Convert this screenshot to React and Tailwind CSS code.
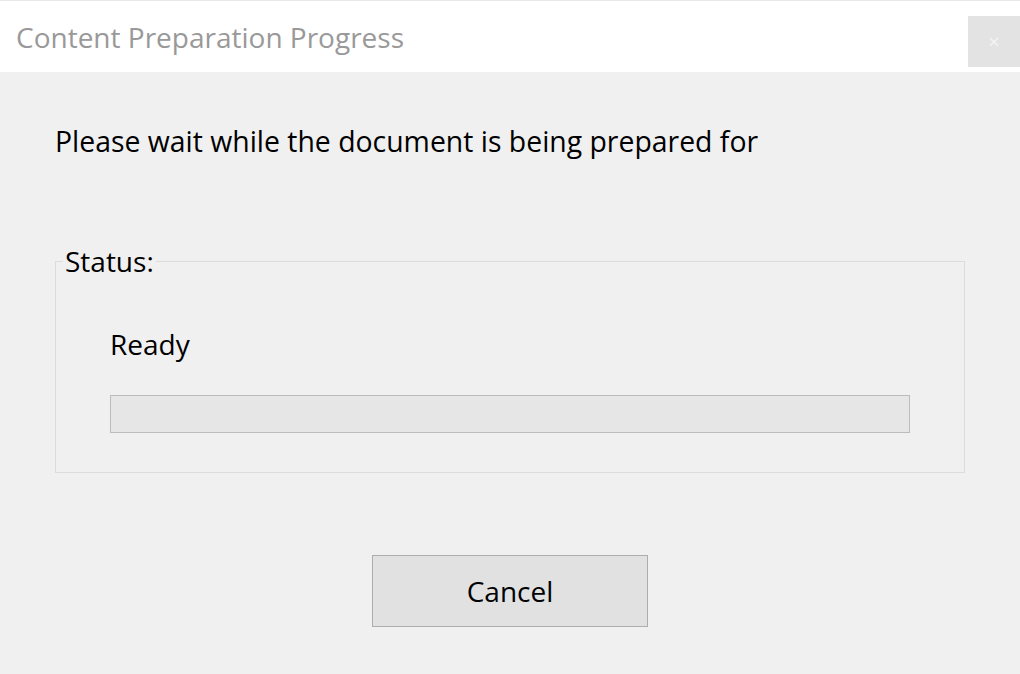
import React from 'react';

const font = { fontFamily: '"Open Sans", "Noto Sans", sans-serif' };

const App = () => {
  return (
    <div className="w-[1020px] h-[674px] flex flex-col bg-[#f0f0f0] overflow-hidden" style={font}>
      {/* title bar */}
      <div className="h-[72px] bg-white border-t border-[#e8e8e8] flex justify-between">
        <div className="pl-[16px] pt-[17px] text-[28px] leading-[38px] text-[#999999]">
          Content Preparation Progress
        </div>
        <button className="mt-[15px] w-[52px] h-[51px] bg-[#e3e3e3] text-[#f4f4f4] text-[20px] leading-none flex items-center justify-center">
          ×
        </button>
      </div>

      {/* body */}
      <div className="flex-1 flex flex-col pt-[51px]">
        <p className="pl-[55px] text-[28.4px] leading-[36px] text-black">
          Please wait while the document is being prepared for
        </p>

        <fieldset className="ml-[55px] mt-[84px] w-[910px] pb-[39px] border border-[#dcdcdc] flex flex-col">
          <legend className="ml-[7px] px-[2px] text-[28px] leading-[36px] text-black">Status:</legend>
          <div className="pl-[54px] pt-[47px] text-[28px] leading-[36px] text-black">Ready</div>
          <div className="ml-[54px] mt-[33px] w-[800px] h-[38px] bg-[#e6e6e6] border border-[#bcbcbc]"></div>
        </fieldset>

        <div className="flex justify-center mt-[82px]">
          <button className="w-[276px] h-[72px] bg-[#e1e1e1] border border-[#adadad] text-[28px] text-black">
            Cancel
          </button>
        </div>
      </div>
    </div>
  );
};

export default App;
